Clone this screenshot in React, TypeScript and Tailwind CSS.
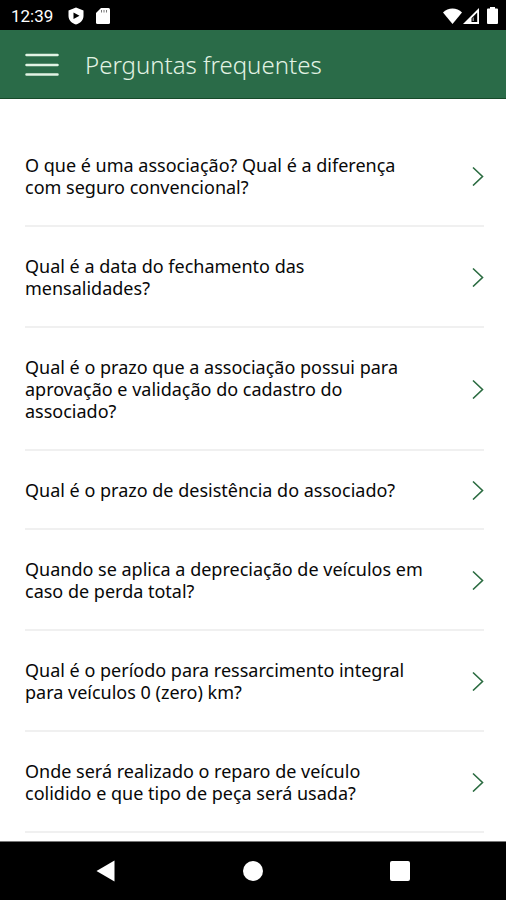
import { useState } from "react";

const questions = [
  "O que é uma associação? Qual é a diferença com seguro convencional?",
  "Qual é a data do fechamento das mensalidades?",
  "Qual é o prazo que a associação possui para aprovação e validação do cadastro do associado?",
  "Qual é o prazo de desistência do associado?",
  "Quando se aplica a depreciação de veículos em caso de perda total?",
  "Qual é o período para ressarcimento integral para veículos 0 (zero) km?",
  "Onde será realizado o reparo de veículo colidido e que tipo de peça será usada?",
];

function StatusBar() {
  return (
    <div className="flex h-[30px] items-center justify-between bg-black pt-px pr-2 pl-[11px] text-white">
      <div className="flex items-center">
        <span className="w-11 font-[Roboto,sans-serif] text-[17px] leading-5">12:39</span>
        <svg className="ml-[13px] h-[18px] w-4" viewBox="0 0 16 18" fill="currentColor" aria-hidden="true">
          <path fillRule="evenodd" d="M8 .5l7.500 3v5.500c0 4-3.500 7.500-7.500 8.500C4 16.500.5 13 .5 9V3.500L8 .5ZM5.500 5.500v6.500L11.500 8.700 5.500 5.500Z" />
        </svg>
        <svg className="ml-3 h-4 w-[14px]" viewBox="0 0 14 16" fill="currentColor" aria-hidden="true">
          <path d="M5 0h7.500Q14 0 14 1.500v13q0 1.500-1.500 1.500h-11Q0 16 0 14.500V5l5-5Z" />
          <path d="M5.500 2v2.500M8 2v2.500M10.500 2v2.500" stroke="#777" strokeWidth="1" />
        </svg>
      </div>
      <div className="flex items-center">
        <svg className="h-4 w-[19px]" viewBox="0 0 19 16" fill="currentColor" aria-hidden="true">
          <path d="M9.500 16 0 4.500C5-.8 14-.8 19 4.500L9.500 16Z" />
        </svg>
        <svg className="ml-px h-4 w-4" viewBox="0 0 16 16" fill="currentColor" aria-hidden="true">
          <path fillRule="evenodd" d="M16 0v16H0L16 0ZM14.200 4.500 8.500 10.200V14h5.700V4.500Z" />
          <path d="M9.500 10.500 11 9v4H9.500Z" opacity=".5" />
        </svg>
        <svg className="ml-2 h-[17px] w-[11px]" viewBox="0 0 11 17" fill="currentColor" aria-hidden="true">
          <path d="M3 0h5v1.500h2q1 0 1 1V16q0 1-1 1H1q-1 0-1-1V2.500q0-1 1-1h2V0Z" />
        </svg>
      </div>
    </div>
  );
}

function Header() {
  return (
    <header className="flex h-[69px] items-center border-b border-[#164a29] bg-[#2a6b48] px-[25px] pt-px text-[#e2f3e4]">
      <button type="button" aria-label="Abrir menu" className="cursor-pointer">
        <svg className="h-6 w-[34px]" viewBox="0 0 34 24" stroke="currentColor" strokeWidth="2.500" strokeLinecap="round" aria-hidden="true">
          <path d="M1.500 2h31M1.500 12h31M1.500 21.500h31" />
        </svg>
      </button>
      <h1 className="ml-[26px] text-2xl font-light">Perguntas frequentes</h1>
    </header>
  );
}

interface QuestionRowProps {
  question: string;
  selected: boolean;
  onSelect: () => void;
}

function QuestionRow({ question, selected, onSelect }: QuestionRowProps) {
  return (
    <li className="border-b-2 border-[#f0f0f0]">
      <button
        type="button"
        aria-pressed={selected}
        onClick={onSelect}
        className="flex w-full cursor-pointer items-center justify-between gap-12 pt-7 pb-[27px] text-left"
      >
        <span className="flex-1">{question}</span>
        <svg className="h-5 w-3 shrink-0" viewBox="0 0 12 20" fill="none" stroke="#2a6b40" strokeWidth="1.600" aria-hidden="true">
          <path d="M1 1.500 10.500 10.500l-9.500 9" />
        </svg>
      </button>
    </li>
  );
}

function NavigationBar() {
  return (
    <nav className="flex h-[59px] items-center justify-around border-t border-[#777] bg-black px-8 text-white">
      <button type="button" aria-label="Voltar" className="cursor-pointer p-1">
        <svg className="h-[22px] w-5" viewBox="0 0 20 22" fill="currentColor" aria-hidden="true">
          <path d="M18.500.5v21L.5 11l18-10.500Z" />
        </svg>
      </button>
      <button type="button" aria-label="Início" className="cursor-pointer p-1">
        <span className="block size-5 rounded-full bg-white" />
      </button>
      <button type="button" aria-label="Recentes" className="cursor-pointer p-1">
        <span className="block size-5 rounded-xs bg-white" />
      </button>
    </nav>
  );
}

export default function App() {
  const [selected, setSelected] = useState<number | null>(null);

  return (
    <div className="flex min-h-screen flex-col bg-white font-['Noto_Sans',sans-serif]">
      <StatusBar />
      <Header />
      <main className="flex-1 pt-[27px] pr-[22px] pb-2 pl-[25px]">
        <ul className="text-[18px] leading-[22px] text-[#080808]">
          {questions.map((question, index) => (
            <QuestionRow
              key={question}
              question={question}
              selected={selected === index}
              onSelect={() => setSelected(index)}
            />
          ))}
        </ul>
      </main>
      <NavigationBar />
    </div>
  );
}
